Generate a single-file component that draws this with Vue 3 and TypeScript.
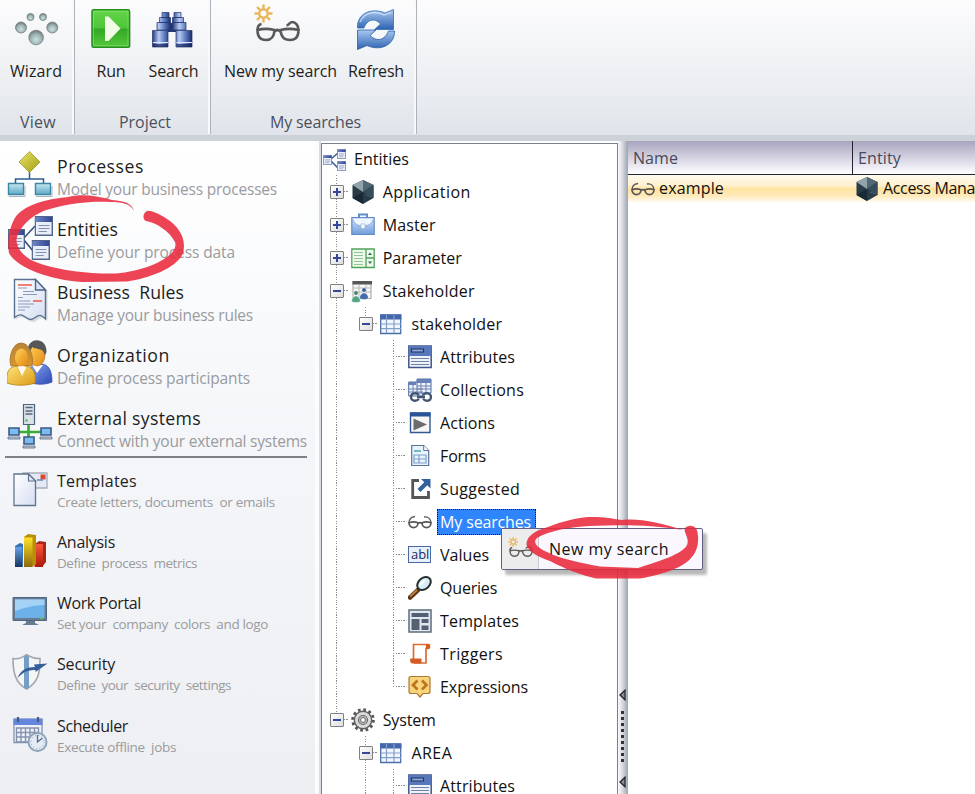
<script setup lang="ts">
interface RibbonButton { icon: string; label: string; width: number }
interface RibbonGroup { name: string; width: number; kind: string; buttons: RibbonButton[] }
interface NavItem { icon: string; title: string; titleWidth: number; sub: string; subWidth: number }
interface TreeRow { label: string; width: number; icon: string; guides: string[]; selected?: boolean }

const groups: RibbonGroup[] = [
  { name: 'View', width: 36, kind: 'view', buttons: [{ icon: 'wizard', label: 'Wizard', width: 52 }] },
  {
    name: 'Project', width: 52, kind: 'project', buttons: [
      { icon: 'run', label: 'Run', width: 29 },
      { icon: 'binoculars', label: 'Search', width: 50 },
    ],
  },
  {
    name: 'My searches', width: 91, kind: 'searches', buttons: [
      { icon: 'newsearch', label: 'New my search', width: 113 },
      { icon: 'refresh', label: 'Refresh', width: 56 },
    ],
  },
]

const mainNav: NavItem[] = [
  { icon: 'processes', title: 'Processes', titleWidth: 87, sub: 'Model your business processes', subWidth: 220 },
  { icon: 'entities', title: 'Entities', titleWidth: 61, sub: 'Define your process data', subWidth: 178 },
  { icon: 'rules', title: 'Business  Rules', titleWidth: 127, sub: 'Manage your business rules', subWidth: 196 },
  { icon: 'organization', title: 'Organization', titleWidth: 113, sub: 'Define process participants', subWidth: 193 },
  { icon: 'external', title: 'External systems', titleWidth: 144, sub: 'Connect with your external systems', subWidth: 250 },
]

const extraNav: NavItem[] = [
  { icon: 'templates', title: 'Templates', titleWidth: 80, sub: 'Create letters, documents  or emails', subWidth: 218 },
  { icon: 'analysis', title: 'Analysis', titleWidth: 58, sub: 'Define  process  metrics', subWidth: 140 },
  { icon: 'portal', title: 'Work Portal', titleWidth: 84, sub: 'Set your  company  colors  and logo', subWidth: 211 },
  { icon: 'security', title: 'Security', titleWidth: 58, sub: 'Define  your  security  settings', subWidth: 174 },
  { icon: 'scheduler', title: 'Scheduler', titleWidth: 71, sub: 'Execute offline  jobs', subWidth: 119 },
]

// Guide codes: full, up, down draw the dotted spine; branch adds the arm; plus and minus add a toggle.
const leaf = ['full', 'none', 'full branch']
const rows: TreeRow[] = [
  { label: 'Application', width: 88, icon: 't-app', guides: ['full branch plus'] },
  { label: 'Master', width: 53, icon: 't-master', guides: ['full branch plus'] },
  { label: 'Parameter', width: 79, icon: 't-param', guides: ['full branch plus'] },
  { label: 'Stakeholder', width: 92, icon: 't-stake', guides: ['full branch minus'] },
  { label: 'stakeholder', width: 91, icon: 't-table', guides: ['full', 'up branch minus'] },
  { label: 'Attributes', width: 75, icon: 't-attr', guides: leaf },
  { label: 'Collections', width: 84, icon: 't-coll', guides: leaf },
  { label: 'Actions', width: 55, icon: 't-action', guides: leaf },
  { label: 'Forms', width: 46, icon: 't-form', guides: leaf },
  { label: 'Suggested', width: 80, icon: 't-suggest', guides: leaf },
  { label: 'My searches', width: 91, icon: 't-glasses', guides: leaf, selected: true },
  { label: 'Values', width: 49, icon: 't-values', guides: leaf },
  { label: 'Queries', width: 57, icon: 't-query', guides: leaf },
  { label: 'Templates', width: 79, icon: 't-templ', guides: leaf },
  { label: 'Triggers', width: 63, icon: 't-trigger', guides: leaf },
  { label: 'Expressions', width: 88, icon: 't-expr', guides: ['full', 'none', 'up branch'] },
  { label: 'System', width: 53, icon: 't-gear', guides: ['up branch minus'] },
  { label: 'AREA', width: 41, icon: 't-table', guides: ['none', 'full branch minus'] },
  { label: 'Attributes', width: 75, icon: 't-attr', guides: ['none', 'full', 'full branch'] },
]

// Spreads the letters of a label over the given width.
const vFit = {
  mounted(el: HTMLElement, binding: { value: number }) {
    const natural = el.getBoundingClientRect().width
    const count = (el.textContent ?? '').length
    if (count > 0) el.style.letterSpacing = `${((binding.value - natural) / count).toFixed(3)}px`
  },
}
</script>

<template>
  <div class="window">
    <svg class="defs" aria-hidden="true">
      <defs>
        <linearGradient id="gBlue" x1="0" x2="0" y1="0" y2="1"><stop offset="0" stop-color="#a9c8f0" /><stop offset="1" stop-color="#2c62b0" /></linearGradient>
        <linearGradient id="gBarrel" x1="0" x2="1"><stop offset="0" stop-color="#27397c" /><stop offset=".35" stop-color="#b5caf3" /><stop offset=".7" stop-color="#5673b9" /><stop offset="1" stop-color="#1b2b68" /></linearGradient>
        <linearGradient id="gGreen" x1="0" x2="0" y1="0" y2="1"><stop offset="0" stop-color="#63d548" /><stop offset=".48" stop-color="#4fc53a" /><stop offset=".52" stop-color="#33a826" /><stop offset="1" stop-color="#55c83c" /></linearGradient>
        <linearGradient id="gWhite" x1="0" x2="1" y1="0" y2="1"><stop offset="0" stop-color="#fff" /><stop offset="1" stop-color="#d5def2" /></linearGradient>
        <linearGradient id="gHead" x1="0" x2="1"><stop offset="0" stop-color="#7086c8" /><stop offset="1" stop-color="#2f4590" /></linearGradient>
        <linearGradient id="gCyan" x1="0" x2="0" y1="0" y2="1"><stop offset="0" stop-color="#cdeaf4" /><stop offset=".5" stop-color="#8cc8dc" /><stop offset="1" stop-color="#63a9c4" /></linearGradient>
        <linearGradient id="gOlive" x1="0" x2="1" y1="0" y2="1"><stop offset="0" stop-color="#e9e66a" /><stop offset="1" stop-color="#a29b12" /></linearGradient>
        <linearGradient id="gGold" x1="0" x2="1" y1="0" y2="1"><stop offset="0" stop-color="#ffe47b" /><stop offset="1" stop-color="#dc9a15" /></linearGradient>
        <linearGradient id="gFace" x1="0" x2="1" y1="0" y2="1"><stop offset="0" stop-color="#ffd35a" /><stop offset="1" stop-color="#e48713" /></linearGradient>
        <linearGradient id="gHair" x1="0" x2="0" y1="0" y2="1"><stop offset="0" stop-color="#b98434" /><stop offset="1" stop-color="#d7952b" /></linearGradient>
        <linearGradient id="gSuit" x1="0" x2="1" y1="0" y2="1"><stop offset="0" stop-color="#8aaaf0" /><stop offset="1" stop-color="#2c47b6" /></linearGradient>
        <linearGradient id="gBar1" x1="0" x2="0" y1="0" y2="1"><stop offset="0" stop-color="#64a3e8" /><stop offset="1" stop-color="#17355f" /></linearGradient>
        <linearGradient id="gBar2" x1="0" x2="0" y1="0" y2="1"><stop offset="0" stop-color="#ffe328" /><stop offset="1" stop-color="#8d6708" /></linearGradient>
        <linearGradient id="gBar3" x1="0" x2="0" y1="0" y2="1"><stop offset="0" stop-color="#f7593b" /><stop offset="1" stop-color="#ae1808" /></linearGradient>
        <linearGradient id="gCase" x1="0" x2="0" y1="0" y2="1"><stop offset="0" stop-color="#d5e5fa" /><stop offset="1" stop-color="#6f9cda" /></linearGradient>
        <radialGradient id="gBall" cx=".5" cy=".65" r=".6"><stop offset="0" stop-color="#c9e2e0" /><stop offset=".6" stop-color="#9fb5b6" /><stop offset="1" stop-color="#737d80" /></radialGradient>
      </defs>

      <symbol id="wizard" viewBox="0 0 46 40">
        <g fill="url(#gBall)" stroke="#778083" stroke-width=".8">
          <circle cx="17.500" cy="9" r="3.500" /><circle cx="30" cy="9" r="3.500" />
          <circle cx="8" cy="19.500" r="5.500" /><circle cx="39.300" cy="19.500" r="5.500" /><circle cx="23.100" cy="29.500" r="7.300" />
        </g>
      </symbol>
      <symbol id="run" viewBox="0 0 46 40">
        <rect x="5" y="3" width="38" height="37" rx="2" fill="#aaa" opacity=".35" />
        <rect x="4" y="1.700" width="37.500" height="37.500" rx="1.500" fill="url(#gGreen)" stroke="#258f1d" stroke-width="1.500" />
        <path d="M5.500 3.200h34.500v34.500H5.500z" fill="none" stroke="#91e87a" stroke-width=".8" opacity=".7" />
        <path d="M17 8.500v24.500h3.500L32.500 20.500 20.500 8.500z" fill="#f2fbe8" />
      </symbol>
      <symbol id="binoculars" viewBox="0 0 46 40">
        <path d="M18 15h10v9H18z" fill="#243873" />
        <g stroke="#23346e" stroke-width=".7" fill="url(#gBarrel)">
          <path d="M13 4.500h7v5h-7zM10.500 9.500h11v5h-11zM8 14.500h13.500V22H8zM3.500 22.500h15.500V39H3.500z" />
          <path d="M25 4.500h7v5h-7zM23.500 9.500h11v5h-11zM23.500 14.500H37V22H23.500zM27 22.500h16V39H27z" />
        </g>
        <path d="M4 34.500h15M27.500 34.500H43" stroke="#dce7ff" stroke-width="1" />
        <path d="M4 37.500h15M27.500 37.500H43" stroke="#17265e" stroke-width="3" opacity=".7" />
      </symbol>
      <symbol id="newsearch" viewBox="0 0 50 40">
        <g stroke="#e8b657" stroke-width="2.400" fill="none">
          <circle cx="11.500" cy="10.500" r="4.200" />
          <path d="M11.500 1.500v4M11.500 15.500v4M2.500 10.500h4M16.500 10.500h4M5 4l3 3M18 4l-3 3M5 17l3-3M15 14l3 3" />
        </g>
        <g fill="none" stroke="#59595a" stroke-width="2.600">
          <path d="M5.500 27c5-1.500 11-1.500 17 0-.3 7-3 10-8.500 10S5.500 34 5.500 27zM28.500 27c6-1.500 12-1.500 18 0 0 7-3 10-8.500 10S29 34 28.500 27z" />
          <path d="M22.500 28.500c2-2 4-2 6 0M5.500 27c0-3.500 1.500-5.500 4-6M46.500 27c0-5-3.500-8-6-8-3 0-3 3-6 3.500" />
        </g>
      </symbol>
      <symbol id="refresh" viewBox="0 0 46 42">
        <path d="M4.500 20C3.500 6 18-1 32 5l8.500-3.500V21.500H21.500l6-5.500C21 9 14 12 11 20z" fill="url(#gBlue)" stroke="#356eb7" stroke-width=".8" />
        <path d="M41.500 23c.5 13-13 21-27.500 14.500L4.500 41.500V22h18.500l-6 5.500c7 7 15 4.500 18.500-4.500z" fill="url(#gBlue)" stroke="#2a5da7" stroke-width=".8" />
        <path d="M7 14C12 3 24 3 31 7l7-2.500" fill="none" stroke="#d8e8fa" stroke-width="1.300" opacity=".8" />
      </symbol>

      <symbol id="processes" viewBox="0 0 46 46">
        <path d="M22.500 21v7M8.500 35v-7h28v7" fill="none" stroke="#2d5c91" stroke-width="1.500" />
        <path d="M22.500 .5L33 11 22.500 21.500 12 11z" fill="url(#gOlive)" stroke="#a09a2a" stroke-width=".8" />
        <path d="M1.500 32.500h15v11h-15zM28.500 32.500h15v11h-15z" fill="url(#gCyan)" stroke="#3d85a5" stroke-width="1.400" />
        <path d="M2 45.500h16V35M29 45.500h16V35" fill="none" stroke="#a8b4ba" stroke-width="1" />
      </symbol>
      <symbol id="sheet" viewBox="0 0 18 20" preserveAspectRatio="none">
        <path d="M.7.700h16.600v18.600H.7z" fill="#e9edf7" stroke="#52658b" stroke-width="1.400" />
        <path d="M1 1h16v5H1z" fill="url(#gHead)" />
        <path d="M4 9.500h10.500M4 12.500h10.500M4 15.500h8" stroke="#8191b2" stroke-width="1.100" />
      </symbol>
      <symbol id="entities" viewBox="0 0 46 46">
        <path d="M17 24L28 12M17 26l9 11" stroke="#344f88" stroke-width="1.600" />
        <use href="#sheet" x="1" y="15" width="17" height="20" />
        <use href="#sheet" x="27.500" y="2" width="18.500" height="20" />
        <use href="#sheet" x="24.500" y="26" width="18.500" height="20" />
      </symbol>
      <symbol id="rules" viewBox="0 0 46 46">
        <path d="M8.500 4v39c8-7 11 2 17 2 5 1 7-8 15-2V14L31 4z" fill="#9ba4b4" opacity=".35" />
        <path d="M7.500 2.500v38c8-7 11 2 16 2 6 0 7-9 15-.5V13L28.500 2.500z" fill="url(#gWhite)" stroke="#5c718f" stroke-width="1.400" />
        <path d="M28.500 2.500V13h10z" fill="#dbe3f5" stroke="#4a6287" stroke-width="1.300" />
        <path d="M11 8h14M26 24h9" stroke="#ef5a45" stroke-width="1.500" />
        <path d="M11 11h9M16 14.500h11M16 17.500h14M11 20.500h5M11 24h12M11 27h16M11 30h12M11 33h7" stroke="#8b9ab9" stroke-width="1.100" />
      </symbol>
      <symbol id="organization" viewBox="0 0 46 46">
        <path d="M22 42c-1-15 3-18 11-18s12 5 12 18c-7 3-16 3-23 0z" fill="url(#gSuit)" stroke="#3850a8" stroke-width=".8" />
        <path d="M25 25l5 8 6-8z" fill="#fff" />
        <ellipse cx="30" cy="15" rx="8" ry="11" fill="url(#gFace)" stroke="#a3651a" stroke-width=".6" />
        <path d="M21 12c-2-15 19-16 18.500 0-1 2-1 2-2 3-1-8-9-5-12-8-2 2-2 5-4.500 5z" fill="#555759" />
        <path d="M4 26C1 19 5 3 14 3s13 14 11 23z" fill="url(#gHair)" stroke="#9b6b26" stroke-width=".7" />
        <ellipse cx="14.500" cy="17.500" rx="6.500" ry="9" fill="url(#gFace)" />
        <path d="M0 43c-1-12 2-16 10-17l4 8 5-8c8 2 10 7 9 17-8 3-20 3-28 0z" fill="url(#gGold)" stroke="#b9831a" stroke-width=".8" />
        <path d="M10.500 27l4.500 9 4.500-9-4-1z" fill="#fff8e8" />
      </symbol>
      <symbol id="pc" viewBox="0 0 14 13">
        <path d="M2 1h10v7H2z" fill="#7bbcf3" stroke="#3e5882" stroke-width="1.600" /><path d="M1 10h12v2H1z" fill="#c5cedb" stroke="#526580" stroke-width=".8" />
      </symbol>
      <symbol id="external" viewBox="0 0 46 46">
        <path d="M21.500 20v14M9 29h28" stroke="#37ad37" stroke-width="2.600" />
        <path d="M16.500 1.500h11v20h-11z" fill="#dce1e9" stroke="#4e6483" stroke-width="1.200" />
        <path d="M18.500 4.500h7M18.500 8h7M18.500 11h7" stroke="#59677b" stroke-width="1.300" /><path d="M18.500 17.500h2" stroke="#35b635" stroke-width="2" />
        <use href="#pc" x="0" y="24" width="14" height="13" /><use href="#pc" x="32" y="24" width="14" height="13" /><use href="#pc" x="15" y="33" width="14" height="13" />
      </symbol>

      <symbol id="templates" viewBox="0 0 36 36">
        <path d="M11 2h24v15H11z" fill="#e5e9f6" stroke="#a5aebd" stroke-width="1.300" /><path d="M28.500 3.500h5v5h-5z" fill="#df4732" />
        <path d="M25 9h6" fill="none" stroke="#6a85b0" stroke-width="1.500" />
        <path d="M2 3h14.500l7 7v24.500H2z" fill="url(#gWhite)" stroke="#62738f" stroke-width="1.300" /><path d="M16.500 3v7h7z" fill="#dce8f4" stroke="#62738f" stroke-width="1.200" />
      </symbol>
      <symbol id="analysis" viewBox="0 0 36 36">
        <path d="M11 35V12l-3-1-5 3v21z" fill="#3672b8" /><path d="M3 15h7v20H3z" fill="url(#gBar1)" />
        <path d="M23 12l4-3 7 1v20l-4 5h-7z" fill="#a72719" /><path d="M22.500 12H31v23h-8.500z" fill="url(#gBar3)" />
        <path d="M12 5l4-3 8 1v29l-4 3h-8z" fill="#b89008" /><path d="M12 5.500h8.500V35H12z" fill="url(#gBar2)" />
      </symbol>
      <symbol id="portal" viewBox="0 0 36 36">
        <path d="M1 4.500h33.500v23H1z" fill="#697b92" stroke="#52647e" stroke-width="1" /><path d="M3 6.500h29.500v18.500H3z" fill="#6cb1ea" />
        <path d="M3 6.500h29.500V12C22 12 12 15 3 18z" fill="#a4d2f5" /><path d="M28 25.500h3" stroke="#57c253" stroke-width="1.700" />
        <path d="M14 28h9v2l4 2H10l4-2z" fill="#667b92" />
      </symbol>
      <symbol id="security" viewBox="0 0 36 36">
        <path d="M1 4.500c5 1 10-1 13.500-4 4 3 8 4 13.500 4 0 15-2 24-13.500 30.500C3 29 1 18 1 4.500z" fill="#f4f5f5" stroke="#a1a6ac" stroke-width="1.600" />
        <path d="M12 3l2.500-2L17 3v31l-2.500 1-2.500-1z" fill="#749dc8" />
        <path d="M5.500 24c3-8 9.500-11 17.500-11l-1-2.500 13.500-1-12 8.500V16c-8 0-12 2-18 8z" fill="#355f9b" />
      </symbol>
      <symbol id="scheduler" viewBox="0 0 36 36">
        <path d="M2 3.500h28v23H2z" fill="#eef1f8" stroke="#8593af" stroke-width="1.300" /><path d="M1.500 2.500h29V9h-29z" fill="#6486dc" />
        <path d="M4.500 12h22v14h-22zM4.500 16.500h22M4.500 21h22M9 12v14M13.500 12v14M18 12v14M22.500 12v14" fill="none" stroke="#8494af" stroke-width="1.400" />
        <path d="M6 1v5M26 1v5" stroke="#4b5b77" stroke-width="2.200" />
        <circle cx="25.500" cy="26" r="9" fill="#e4edf5" stroke="#8ea0b8" stroke-width="1.900" /><path d="M25.500 19v7l5-4" fill="none" stroke="#536b8c" stroke-width="1.300" />
        <circle cx="25.500" cy="26" r="6.500" fill="none" stroke="#7a91ab" stroke-dasharray="1 2.400" />
      </symbol>

      <symbol id="t-entities" viewBox="0 0 24 24">
        <path d="M8 11l7-6M8 13l7 7" stroke="#405a91" stroke-width="1.600" />
        <use href="#sheet" x="0" y="7" width="9" height="10" /><use href="#sheet" x="14" y="1" width="9" height="10" /><use href="#sheet" x="14" y="13" width="9" height="10" />
      </symbol>
      <symbol id="t-app" viewBox="0 0 24 24">
        <path d="M12 0l10.500 5v13L12 24 1.500 18V5z" fill="#283b47" /><path d="M12 0v12L1.500 5z" fill="#90a4ac" /><path d="M12 0l10.500 5L12 12z" fill="#526975" />
        <path d="M12 12l10.500 6V5z" fill="#344d5b" /><path d="M12 12v12L1.500 18z" fill="#182a35" /><path d="M15 15l6 2" stroke="#586c76" stroke-width=".7" />
      </symbol>
      <symbol id="t-master" viewBox="0 0 24 24">
        <path d="M8 5V1.500h8V5" fill="none" stroke="#5f8dca" stroke-width="2" />
        <path d="M.8 4.500h22.400v17H.8z" fill="url(#gCase)" stroke="#5f8bc5" stroke-width="1.200" />
        <path d="M1.500 6c2 5 5 7 10.500 7s8.500-2 10.500-7" fill="#eef5ff" stroke="#779fd4" stroke-width=".8" /><path d="M10 11h4v4.500h-4z" fill="#fff" stroke="#90acd2" stroke-width=".7" />
      </symbol>
      <symbol id="t-param" viewBox="0 0 24 24">
        <path d="M.8 3h22.400v18.500H.8zM15 3v18.500M15 12h8" fill="#eef8ed" stroke="#51a25b" stroke-width="1.300" />
        <path d="M3 6.500h9M3 9.500h9M3 12.500h9M3 15.500h9M3 18.500h9" stroke="#92c596" stroke-width="1.200" /><path d="M17 9l2-2.500L21 9zM17 15.500h4L19 18z" fill="#276e36" />
      </symbol>
      <symbol id="t-stake" viewBox="0 0 24 24">
        <path d="M2 2.500h18v17H2z" fill="#f8f8f8" stroke="#9d9d9d" /><path d="M1.500 2h19.500v3.500H1.500z" fill="#575757" /><path d="M2 9h18M2 13h18M8 6v13M15 6v13" stroke="#b7b7b7" />
        <circle cx="5" cy="14" r="2.300" fill="#427f6b" stroke="#fff" stroke-width=".6" /><path d="M.5 22.500c0-7.500 9-7.500 9 0-2 1.500-7 1.500-9 0z" fill="#55a585" stroke="#fff" stroke-width=".6" />
        <circle cx="13" cy="11" r="2.300" fill="#365c98" stroke="#fff" stroke-width=".6" /><path d="M8.500 19.500c0-7.500 9-7.500 9 0-2 1.500-7 1.500-9 0z" fill="#446caa" stroke="#fff" stroke-width=".6" />
      </symbol>
      <symbol id="t-table" viewBox="0 0 24 24">
        <path d="M1.700 3h20v18.500h-20z" fill="#f2f7ff" stroke="#4d6fa9" stroke-width="1.300" /><path d="M1 2.500h21.400v5H1z" fill="#4567ac" />
        <path d="M2 12h20M2 16.700h20M7.500 3v18M15 3v18" stroke="#849fc8" stroke-width="1.200" />
      </symbol>
      <symbol id="t-attr" viewBox="0 0 24 24">
        <path d="M.8 1h22.400v21.500H.8z" fill="#eef2fa" stroke="#41578b" stroke-width="1.500" /><path d="M.5 1h23v10H.5z" fill="#5978bb" /><path d="M3.500 4h12v3h-12z" fill="#8ba6d9" stroke="#20355f" stroke-width="1.200" />
        <path d="M3 13.500h18M3 16.500h18M3 19.500h18" stroke="#7282a3" stroke-width="1.200" />
      </symbol>
      <symbol id="t-coll" viewBox="0 0 24 24">
        <path d="M.7 4h14v14H.7z" fill="#edf2fc" stroke="#4f6aa2" /><path d="M9 1h14v14H9z" fill="#edf2fc" stroke="#4f6aa2" /><path d="M9 1h14v4H9zM0 4h8v3H0z" fill="#6680bc" />
        <path d="M0 11h15M0 14h15M5 5v12M9 8h14M9 11h14M13 1v14M18 1v14" stroke="#6d82ad" />
        <path d="M11 17c-3-3-8-2-8 2s5 5 8 2M15 17c3-3 8-2 8 2s-5 5-8 2M9 19h8" fill="none" stroke="#435671" stroke-width="2.300" />
      </symbol>
      <symbol id="t-action" viewBox="0 0 24 24">
        <path d="M2.500 2h19.500v19.500H2.500z" fill="#f7f7f7" stroke="#315a94" stroke-width="1.400" /><path d="M2 1.500h20.500v4H2z" fill="#285596" /><path d="M5.500 7.500L19 13.500 5.500 19.500z" fill="#6c6c6c" />
      </symbol>
      <symbol id="t-form" viewBox="0 0 24 24">
        <path d="M3.700 1.500h12l5 5v15h-17z" fill="#e8f3ff" stroke="#5c7395" stroke-width="1.200" /><path d="M15.700 1.500v5h5" fill="#fff" stroke="#5c7395" />
        <path d="M6 7h7" stroke="#4aa8a1" stroke-width="1.500" /><path d="M6 11h12v8H6zM6 15h12M11 11v8" fill="none" stroke="#7e9ec9" stroke-width="1.200" />
      </symbol>
      <symbol id="t-suggest" viewBox="0 0 24 24">
        <path d="M11 3.500H4.700V20.500H20.500V14" fill="none" stroke="#555" stroke-width="2.800" /><path d="M13 2h9.500v9.500l-3.200-3.200-6.800 6.800-3-3 6.800-6.800z" fill="#34619e" />
      </symbol>
      <symbol id="t-glasses" viewBox="0 0 24 24">
        <path d="M1 13c0-4 2-6 6-6.500M23 13c0-4-3-7-7-6" fill="none" stroke="#575757" stroke-width="1.300" />
        <path d="M1 12.800c3-1.200 6-1.200 9 0 0 6.500-9 6.500-9 0zM14 12.800c3-1.200 6-1.200 9 0 0 6.500-9 6.500-9 0zM10 13.300c1.300-1 2.700-1 4 0" fill="none" stroke="#575757" stroke-width="1.700" />
      </symbol>
      <symbol id="t-query" viewBox="0 0 24 24">
        <path d="M2 21.500L10 14" stroke="#5b3717" stroke-width="4.500" stroke-linecap="round" /><path d="M2 20.500L9 14" stroke="#b9813b" stroke-width="2" />
        <ellipse cx="16" cy="7.500" rx="7.500" ry="5.500" transform="rotate(-40 16 7.500)" fill="#d5eef6" stroke="#292d30" stroke-width="2" /><path d="M12 9l5-5" stroke="#fff" stroke-width="2" />
      </symbol>
      <symbol id="t-templ" viewBox="0 0 24 24">
        <path d="M1 1h22v22H1z" fill="#e2e7ed" stroke="#5d6c7d" stroke-width="1.500" /><path d="M3.500 4h17v4h-17zM3.500 10h8v11h-8zM13.500 10h7v4h-7zM13.500 16.500h7V21h-7z" fill="#526173" />
      </symbol>
      <symbol id="t-trigger" viewBox="0 0 24 24">
        <path d="M5.500 17V2.500h14.500c2.500 0 2 4-.5 4H18v14.500H6" fill="#fff" stroke="#dc6c35" stroke-width="1.700" /><path d="M2.500 16.500h11v5H4.500c-2 0-3-3-2-5zM18 2h3.500v5H18z" fill="#d55c24" />
      </symbol>
      <symbol id="t-expr" viewBox="0 0 24 24">
        <path d="M3 1.500h17q2 0 2 2v13q0 2-2 2h-5L12 22l-3-3.500H3q-2 0-2-2v-13q0-2 2-2z" fill="#f8d47c" stroke="#a97935" stroke-width="1.200" /><path d="M9.500 5.500L5 10l4.500 4.500M14 5.500l4.500 4.500L14 14.500" fill="none" stroke="#bd741e" stroke-width="2.700" />
      </symbol>
      <symbol id="t-gear" viewBox="0 0 24 24">
        <circle cx="12" cy="12" r="10.300" fill="none" stroke="#555" stroke-width="3" stroke-dasharray="2.700 2.693" />
        <circle cx="12" cy="12" r="8.700" fill="#d9d9d9" stroke="#606060" stroke-width="1.400" /><circle cx="12" cy="12" r="4.500" fill="#bbb" stroke="#6a6a6a" stroke-width="1.100" /><circle cx="12" cy="12" r="2.400" fill="#fff" stroke="#666" />
      </symbol>
      <symbol id="handle" viewBox="0 0 7 12">
        <path d="M6 1.200v9.600L1 6z" fill="#8a8f97" stroke="#25272b" stroke-width="1.300" />
      </symbol>
    </svg>

    <header class="ribbon">
      <section v-for="g in groups" :key="g.name" class="group" :class="g.kind">
        <div class="buttons">
          <button v-for="b in g.buttons" :key="b.label" class="tool" :class="b.icon">
            <svg class="tool-icon"><use :href="'#' + b.icon" /></svg>
            <span v-fit="b.width" class="text">{{ b.label }}</span>
          </button>
        </div>
        <div class="group-name"><span v-fit="g.width" class="text">{{ g.name }}</span></div>
      </section>
    </header>

    <main class="body">
      <nav class="sidebar">
        <div class="main-nav">
          <div v-for="n in mainNav" :key="n.title" class="nav-item">
            <svg class="nav-icon"><use :href="'#' + n.icon" /></svg>
            <div>
              <div class="title"><span v-fit="n.titleWidth" class="text">{{ n.title }}</span></div>
              <div class="sub"><span v-fit="n.subWidth" class="text">{{ n.sub }}</span></div>
            </div>
          </div>
        </div>
        <div class="rule"></div>
        <div class="extra-nav">
          <div v-for="n in extraNav" :key="n.title" class="nav-item">
            <svg class="nav-icon"><use :href="'#' + n.icon" /></svg>
            <div>
              <div class="title"><span v-fit="n.titleWidth" class="text">{{ n.title }}</span></div>
              <div class="sub"><span v-fit="n.subWidth" class="text">{{ n.sub }}</span></div>
            </div>
          </div>
        </div>
      </nav>

      <section class="tree">
        <div class="row root">
          <svg class="row-icon"><use href="#t-entities" /></svg>
          <span class="label"><span v-fit="55" class="text">Entities</span></span>
        </div>
        <div v-for="(r, i) in rows" :key="i" class="row">
          <span v-for="(g, j) in r.guides" :key="j" class="guide" :class="g"><i v-if="g.includes('us')" class="toggle"></i></span>
          <span v-if="r.icon === 't-values'" class="row-icon abl"><span v-fit="18" class="text">abl</span></span>
          <svg v-else class="row-icon"><use :href="'#' + r.icon" /></svg>
          <span class="label" :class="{ selected: r.selected }"><span v-fit="r.width" class="text">{{ r.label }}</span></span>
        </div>
      </section>

      <div class="splitter">
        <svg class="arrow"><use href="#handle" /></svg>
        <span class="grip"><i v-for="k in 9" :key="k"></i></span>
        <svg class="arrow"><use href="#handle" /></svg>
      </div>

      <section class="grid">
        <div class="grid-head">
          <div class="cell name"><span v-fit="45" class="text">Name</span></div>
          <div class="cell"><span v-fit="43" class="text">Entity</span></div>
        </div>
        <div class="grid-row">
          <div class="cell name"><svg class="row-icon"><use href="#t-glasses" /></svg><span v-fit="65" class="text">example</span></div>
          <div class="cell"><svg class="row-icon"><use href="#t-app" /></svg><span v-fit="92" class="text">Access Mana</span></div>
        </div>
      </section>
    </main>

    <div class="menu">
      <div class="menu-icon"><svg><use href="#newsearch" /></svg></div>
      <span v-fit="120" class="text">New my search</span>
    </div>

    <svg class="marks" viewBox="0 0 975 794">
      <path d="M134 211C132 204 126 201 112 200C95 195 80 194 68 197C45 199 26 205 17 215C9 225 7 243 9 253C17 268 50 280 82 282L127 281.500C150 278 177 268 183 253C187 238 178 226 167 219C158 213 150 210 147 211C143 213 142 219 146 221C157 223 169 231 175 242C178 251 165 260 150 266C135 271 120 274 110 273.500C85 274 50 269 31 260C19 253 15 243 17 237C21 225 34 213 50 209C70 203 92 201 110 202C124 202 130 204 134 211Z" />
      <path d="M683 530C660 523 640 518 622 520C610 518 602 516.500 588 517C570 519 558 523 545 528C532 532 526 538 526.500 545C529 552 538 557 550 561C565 569 581 575 596 578.500L640 578.500C665 574 684 567 691 558C698 551 700 539 696.500 529C693 524.500 687 525 684.500 529C685 535 689.500 539 687 545C682 554 663 560 638 568L600 566.500C582 563 560 559 547 552C536 547 532.500 542 537 538C550 530.500 570 527 590 526C620 524.500 650 524.500 683 530Z" />
    </svg>
  </div>
</template>

<style>
body { margin: 0; overflow: hidden; }
</style>

<style scoped>
.window { position: relative; width: 975px; height: 794px; overflow: hidden; display: flex; flex-direction: column; background: #fff; color: #1e1e22; font: 16px/22px "Open Sans", "Noto Sans", sans-serif; }
.defs { position: absolute; width: 0; height: 0; }
.text { display: inline-block; white-space: pre; }

.ribbon { display: flex; flex: none; height: 135px; border-bottom: 6px solid #bcc0c7; border-image: linear-gradient(#a7abb2, #cdd1d8) 1; background: linear-gradient(#fcfcfd, #eff1f4 50%, #e0e4ea); }
.group { box-sizing: border-box; display: flex; flex-direction: column; height: 134px; border-right: 1px solid #aeb3ba; box-shadow: inset -2px 0 0 #f8f9fa; }
.group.view { width: 75px; padding-left: 10px; }
.group.project { width: 136px; padding-left: 15px; }
.group.searches { width: 206px; padding-left: 13px; }
.buttons { display: flex; height: 111px; }
.view .group-name { padding-left: 10px; }
.project .group-name { padding-left: 29px; }
.searches .group-name { padding-left: 46px; }
.group-name { color: #4b5160; }
.tool { display: flex; flex-direction: column; align-items: center; padding: 8px 0 0; border: 0; background: none; color: inherit; font: inherit; }
.tool.wizard { width: 52px; }
.tool.run { width: 42px; }
.tool.binoculars { width: 51px; margin-left: 16px; }
.binoculars .tool-icon { margin-left: -4px; }
.tool.newsearch { width: 113px; padding-top: 3px; }
.tool.refresh { width: 56px; margin-left: 11px; }
.tool-icon { flex: none; width: 46px; height: 40px; margin-bottom: 12px; }
.refresh .tool-icon { height: 42px; margin-bottom: 10px; }
.newsearch .tool-icon { width: 50px; height: 40px; margin: 0 7px 17px 0; }

.body { display: flex; flex: 1; min-height: 0; }
.sidebar { flex: none; box-sizing: border-box; width: 321px; border-right: 2px solid #d8dde4; background: linear-gradient(#fff, #f4f6f9 45%, #edeff2); box-shadow: inset -4px 0 0 #fbfcfd; }
.main-nav { display: flex; flex-direction: column; gap: 6px; padding-top: 7px; }
.nav-item { display: flex; }
.main-nav .nav-item { height: 57px; padding-left: 7px; }
.main-nav .nav-icon { width: 46px; height: 46px; margin: 3px 4px 0 0; }
.nav-icon { flex: none; }
.main-nav .title { margin-top: 6px; font-size: 17.700px; line-height: 24px; }
.main-nav .sub { font-size: 15.500px; line-height: 22px; }
.sub { color: #9a9b9e; }
.rule { width: 302px; height: 1.500px; margin: -1px 0 1px 5px; background: #7c8086; }
.extra-nav .nav-item { height: 61.300px; padding-left: 12px; }
.extra-nav .nav-icon { width: 36px; height: 36px; margin: 12px 9px 0 0; }
.extra-nav .title { margin-top: 11px; font-size: 16px; line-height: 22px; }
.extra-nav .sub { font-size: 13.500px; line-height: 20px; }

.tree { flex: none; box-sizing: border-box; width: 297px; margin-top: 2px; overflow: hidden; border: 1px solid #7b818c; border-bottom: 0; background: #fff; color: #111; }
.row { display: flex; align-items: center; width: 295px; height: 33px; }
.root { height: 31px; padding-left: 1px; }
.root .label { padding: 0 3px 2px; }
.row-icon { flex: none; width: 24px; height: 24px; }
.label { margin-left: 5px; padding: 1px 3px; }
.root .row-icon + .label { margin-left: 4px; }
.selected { box-sizing: border-box; width: 99px; border: 1px dotted #111; padding: 1px 2px; background: #2f85fb; color: #fff; }
.guide { --line: #8c8c8c; display: flex; align-items: center; width: 28.700px; height: 33px; flex: none; background-repeat: no-repeat; }
.guide.full { background-image: repeating-linear-gradient(var(--line) 0 1.300px, transparent 1.300px 2.600px); background-size: 1px 33px; background-position: 14px 0; }
.guide.up { background-image: repeating-linear-gradient(var(--line) 0 1.300px, transparent 1.300px 2.600px); background-size: 1px 16px; background-position: 14px 0; }
.guide.branch { background-image: repeating-linear-gradient(var(--line) 0 1.300px, transparent 1.300px 2.600px), repeating-linear-gradient(90deg, var(--line) 0 1.300px, transparent 1.300px 2.600px); background-size: 1px 33px, 13px 1px; background-position: 14px 0, 14px 16px; }
.guide.up.branch { background-size: 1px 17px, 13px 1px; }
.toggle { box-sizing: border-box; width: 14px; height: 14px; margin-left: 8px; border: 1px solid #808080; border-radius: 1px; background: linear-gradient(#35479b, #35479b) center / 8px 2px no-repeat, linear-gradient(135deg, #fff, #ddd); }
.plus .toggle { background: linear-gradient(#35479b, #35479b) center / 8px 2px no-repeat, linear-gradient(#35479b, #35479b) center / 2px 8px no-repeat, linear-gradient(135deg, #fff, #ddd); }
.abl { box-sizing: border-box; width: 23px; height: 17px; margin-right: 1px; padding-left: 2px; border: 1px solid #4c68a1; background: #e9effb; color: #182c62; font-size: 13px; line-height: 14px; }

.splitter { flex: none; box-sizing: border-box; display: flex; flex-direction: column; width: 10px; padding: 548px 0 0 1px; background: linear-gradient(90deg, #fafbfc, #d6dae0 45%, #9ca4ae); }
.arrow { flex: none; width: 7px; height: 12px; }
.grip { display: flex; flex-direction: column; gap: 3px; padding: 10px 0 14px 2px; }
.grip i { width: 3px; height: 3px; background: #333; }

.grid { flex: 1; min-width: 0; overflow: hidden; background: #fff; }
.grid-head { display: flex; box-sizing: border-box; height: 34px; border-bottom: 1px solid #262633; background: linear-gradient(#a8a4bf, #f5f4fa 88%, #fff); color: #484a59; }
.cell { display: flex; flex: none; align-items: center; padding-left: 2px; }
.cell.name { box-sizing: border-box; width: 225px; padding-left: 3px; }
.grid-head .cell.name { border-right: 1px solid #22222c; padding-left: 5px; }
.grid-head .cell + .cell { padding-left: 5px; }
.grid-row { display: flex; height: 27px; background: linear-gradient(#fffbf0, #fff0cd 40%, #ffe3a1 50%, #ffeabb 78%, #fffaf0); color: #111; }
.grid-row .text { margin: -2px 0 0 4px; }

.menu { position: absolute; left: 501px; top: 528px; box-sizing: border-box; display: flex; align-items: center; width: 202px; height: 42px; border: 1.500px solid #605e83; border-radius: 2px; background: #faf8fe; box-shadow: 4px 5px 3px rgba(0, 0, 0, .28); color: #111; }
.menu-icon { display: flex; align-items: center; box-sizing: border-box; width: 37px; height: 100%; margin-right: 10px; padding: 0 0 4px 5px; border-right: 1px solid #c9c9cc; background: #ececec; }
.menu-icon svg { width: 27px; height: 24px; }
.marks { position: absolute; inset: 0; width: 975px; height: 794px; pointer-events: none; }
.marks path { fill: #e9283b; opacity: .87; }
</style>
